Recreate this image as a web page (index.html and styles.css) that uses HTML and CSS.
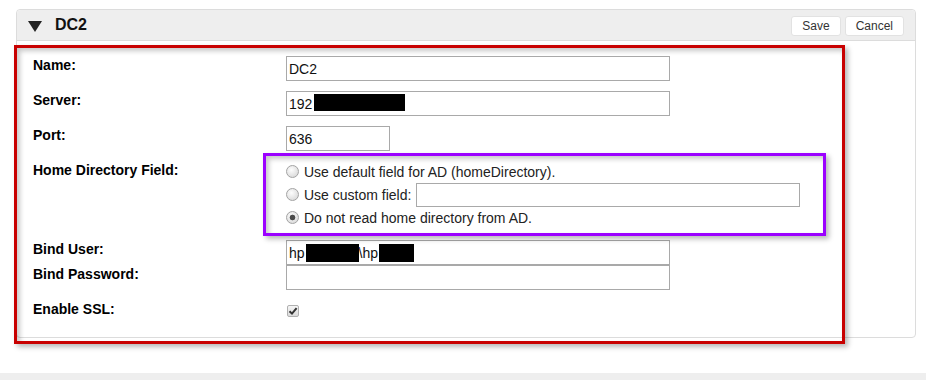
FILE: index.html
```html
<!DOCTYPE html>
<html lang="en">

<head>
    <meta charset="UTF-8">
    <meta name="viewport" content="width=device-width, initial-scale=1.0">
    <title>Directory connection DC2</title>
    <link rel="stylesheet" href="styles.css">
</head>

<body>
    <div class="panel">
        <div class="panel-head">
            <svg class="caret" width="14" height="11" viewBox="0 0 14 11"><polygon points="0,0 14,0 7,11" fill="#222"/></svg>
            <h2 class="title">DC2</h2>
            <div class="actions">
                <button class="btn">Save</button>
                <button class="btn">Cancel</button>
            </div>
        </div>
        <div class="panel-body">
            <div class="row">
                <label class="lbl">Name:</label>
                <input class="txt wide" type="text" value="DC2">
            </div>
            <div class="row">
                <label class="lbl">Server:</label>
                <div class="txt wide fake">192<span class="redact r-server"></span></div>
            </div>
            <div class="row">
                <label class="lbl">Port:</label>
                <input class="txt short" type="text" value="636">
            </div>
            <div class="row home">
                <label class="lbl">Home Directory Field:</label>
                <div class="options">
                    <label class="opt"><input class="radio" type="radio" name="hd">Use default field for AD (homeDirectory).</label>
                    <label class="opt opt-custom"><input class="radio" type="radio" name="hd">Use custom field:<input class="txt custom" type="text"></label>
                    <label class="opt"><input class="radio" type="radio" name="hd" checked>Do not read home directory from AD.</label>
                </div>
            </div>
            <div class="row stacked">
                <label class="lbl">Bind User:</label>
                <div class="txt wide fake">hp<span class="redact r-user1"></span>\hp<span class="redact r-user2"></span></div>
            </div>
            <div class="row">
                <label class="lbl">Bind Password:</label>
                <input class="txt wide" type="password">
            </div>
            <div class="row ssl">
                <label class="lbl">Enable SSL:</label>
                <span class="check">
                    <svg width="10" height="10" viewBox="0 0 10 10"><path d="M1.5 5.2 L4 7.6 L8.6 2.2" fill="none" stroke="#333" stroke-width="2"/></svg>
                </span>
            </div>
        </div>
    </div>
    <div class="footer-bar"></div>

    <!-- annotation frames drawn over the screenshot -->
    <div class="mark mark-red"></div>
    <div class="mark mark-purple"></div>
</body>
</html>
```

FILE: styles.css
```css
* {
    margin: 0;
    padding: 0;
    box-sizing: border-box;
}

body {
    font-family: "Liberation Sans", Arial, sans-serif;
    font-size: 14px;
    color: #111;
    background: #fff;
}

.panel {
    width: 900px;
    margin: 9px 0 0 16px;
    border: 1px solid #dcdcdc;
    border-radius: 4px;
}

.panel-head {
    height: 31px;
    display: flex;
    align-items: center;
    padding: 0 11px 0 11px;
    background: #eeeeee;
    border-bottom: 1px solid #dcdcdc;
    border-radius: 4px 4px 0 0;
}

.caret {
    display: block;
    margin-top: 2px;
}

.title {
    font-size: 16px;
    font-weight: bold;
    color: #111;
    margin-left: 13px;
}

.actions {
    margin-left: auto;
    display: flex;
    gap: 4px;
    margin-top: 1px;
}

.btn {
    height: 20px;
    padding: 0 10px;
    font-family: "Liberation Sans", Arial, sans-serif;
    font-size: 12px;
    color: #333;
    background: #fff;
    border: 1px solid #e2e2e2;
    border-radius: 3px;
}

.panel-body {
    padding: 15px 16px 19px 16px;
}

.row {
    display: grid;
    grid-template-columns: 253px 1fr;
    align-items: start;
    margin-bottom: 10px;
}

.row.home {
    margin-bottom: 12px;
}

.row.stacked {
    margin-bottom: 0;
}

.row.ssl {
    margin-bottom: 0;
}

.lbl {
    font-weight: bold;
    font-size: 14px;
    line-height: 18px;
    color: #000;
}

.txt {
    height: 25px;
    padding: 0 2px;
    border: 1px solid #a9a9a9;
    font-family: "Liberation Sans", Arial, sans-serif;
    font-size: 14px;
    color: #111;
    background: #fff;
    outline: none;
}

.wide {
    width: 384px;
}

.short {
    width: 104px;
}

.fake {
    display: flex;
    align-items: center;
}

.redact {
    display: inline-block;
    background: #000;
}

.r-server {
    width: 91px;
    height: 17px;
    margin-left: 2px;
    margin-top: -3px;
}

.r-user1 {
    width: 53px;
    height: 18px;
    margin-left: 1px;
}

.r-user2 {
    width: 35px;
    height: 18px;
    margin-left: 1px;
}

.options {
    display: flex;
    flex-direction: column;
    color: #222;
}

.opt {
    display: flex;
    align-items: center;
    height: 21px;
}

.opt-custom {
    height: 25px;
}

.radio {
    appearance: none;
    width: 13px;
    height: 13px;
    margin-right: 5px;
    border: 1px solid #a3a3a3;
    border-radius: 50%;
    background: radial-gradient(circle at 40% 35%, #fdfdfd, #d2d2d2);
}

.radio:checked {
    background: radial-gradient(circle, #4a4a4a 0 2.5px, transparent 3.2px),
        radial-gradient(circle at 40% 35%, #fdfdfd, #d2d2d2);
}

.custom {
    width: 384px;
    height: 24px;
    margin-left: 5px;
}

.check {
    display: flex;
    align-items: center;
    justify-content: center;
    width: 12px;
    height: 12px;
    margin: 5px 0 0 1px;
    border: 1px solid #b0b0b0;
    border-radius: 2px;
    background: linear-gradient(#f6f6f6, #dadada);
}

.footer-bar {
    height: 20px;
    margin-top: 35px;
    background: #eeeeee;
}

.mark {
    position: absolute;
    border-style: solid;
    border-width: 3px;
    box-shadow: 3px 3px 5px rgba(0, 0, 0, 0.28), inset 3px 3px 5px rgba(0, 0, 0, 0.22);
    pointer-events: none;
}

.mark-red {
    left: 14px;
    top: 45px;
    width: 831px;
    height: 299px;
    border-color: #c80000;
}

.mark-purple {
    left: 263px;
    top: 153px;
    width: 563px;
    height: 83px;
    border-color: #9b00ff;
}
```
